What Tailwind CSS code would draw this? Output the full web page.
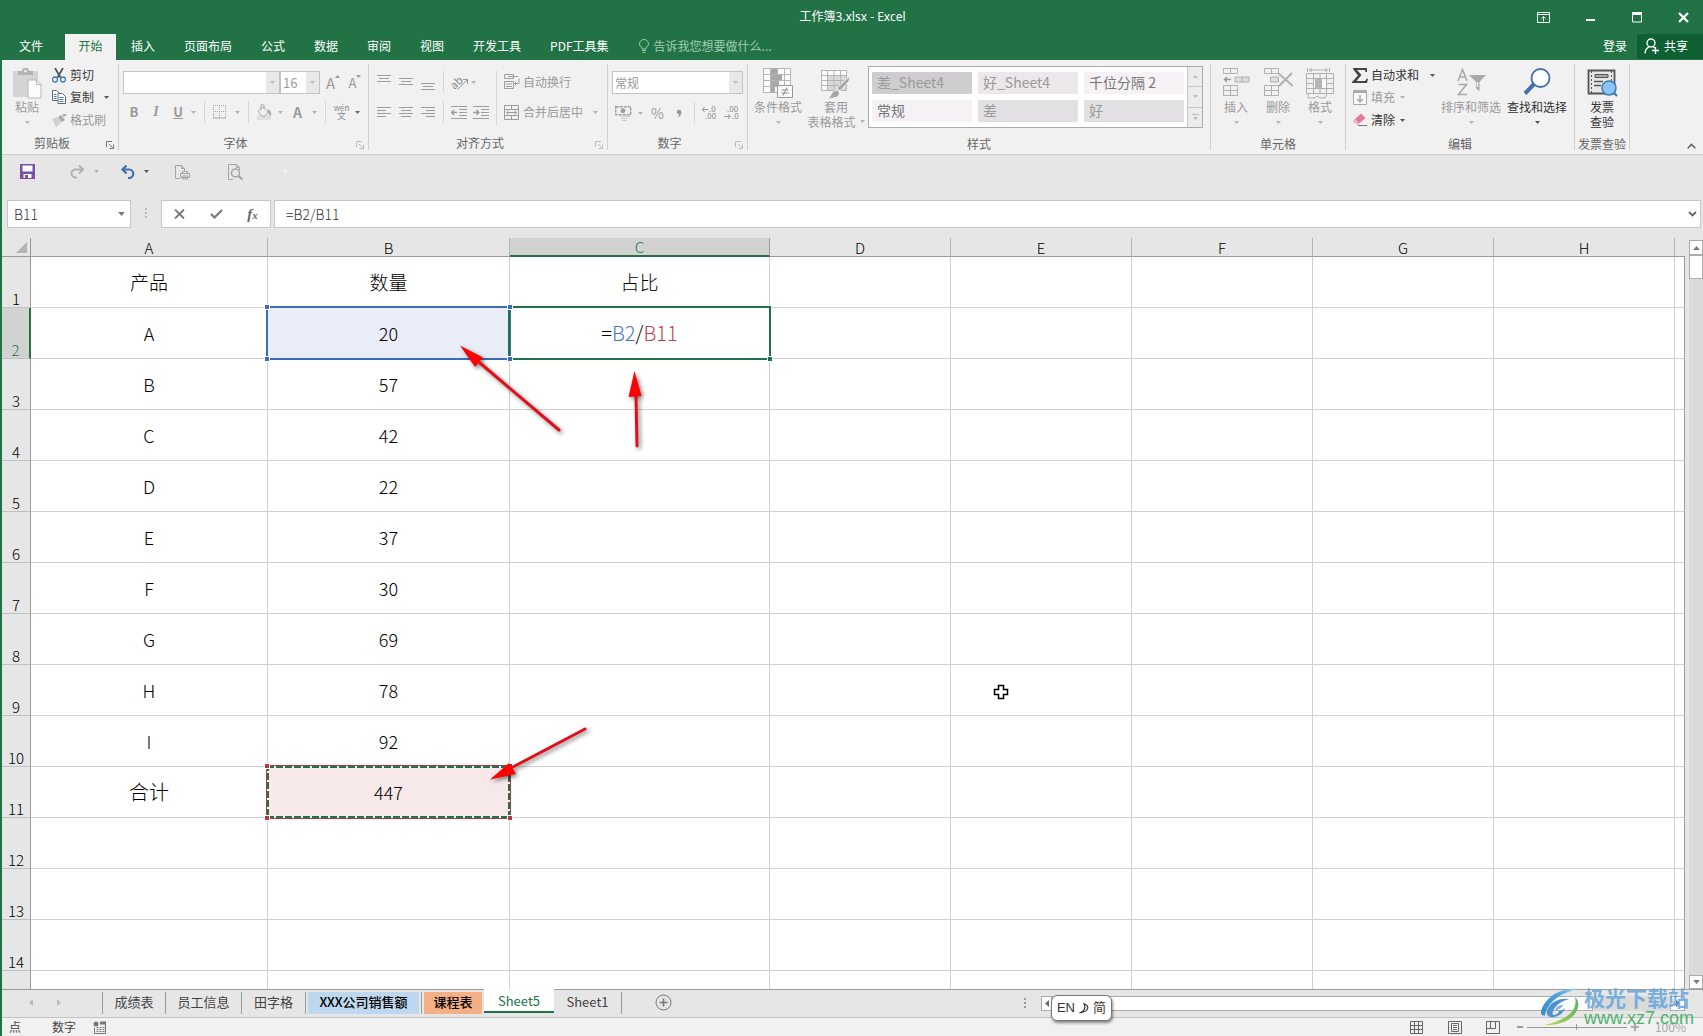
<!DOCTYPE html>
<html lang="zh-CN">
<head>
<meta charset="utf-8">
<title>工作簿3.xlsx - Excel</title>
<script src="https://cdn.jsdelivr.net/npm/@tailwindcss/browser@4"></script>
</head>
<body class="h-screen overflow-hidden bg-[#e6e6e6] font-['Noto_Sans_CJK_SC','Noto_Sans',sans-serif] text-xs leading-4 text-[#333]">

<svg class="hidden">
  <symbol id="caret" viewBox="0 0 5 3"><path d="M0 0h5L2.5 3z" fill="currentColor"/></symbol>
  <symbol id="launch" viewBox="0 0 8 8"><path d="M.5 6V.5H6M3 3l3.500 3.500M7.500 3.500v4h-4" fill="none" stroke="currentColor"/></symbol>
</svg>

<div class="flex h-full flex-col border-l-2 border-[#217346]">

  <!-- title bar -->
  <header class="shrink-0 bg-[#217346] text-white">
    <div class="flex h-[34px] items-center">
      <div class="flex-1 pl-[14px]"></div>
      <h1 class="font-['Noto_Sans','Noto_Sans_CJK_SC',sans-serif] text-xs">工作簿3.xlsx - Excel</h1>
      <div class="flex flex-1 items-center justify-end gap-9 pr-[14px]">
        <button aria-label="功能区显示选项"><svg class="h-[11px] w-[13px]" viewBox="0 0 13 11" fill="none" stroke="#fff"><path d="M.5.500h12v10H.5zM.5 2.500h12M6.500 9.500v-5M4.500 6.500l2-2 2 2"/></svg></button>
        <button aria-label="最小化"><svg class="h-[11px] w-[10px]" viewBox="0 0 10 11"><path d="M0 7h9v2H0z" fill="#fff"/></svg></button>
        <button aria-label="最大化"><svg class="h-[11px] w-[10px]" viewBox="0 0 10 11"><path d="M.5.500h9v9.500h-9z" fill="none" stroke="#fff"/><path d="M0 0h10v3H0z" fill="#fff"/></svg></button>
        <button aria-label="关闭"><svg class="h-[11px] w-[11px]" viewBox="0 0 11 11"><path d="M1 1l9 9M10 1l-9 9" stroke="#fff" stroke-width="2.200"/></svg></button>
      </div>
    </div>
    <nav class="flex h-[26px] items-stretch gap-px *:pb-[2px]">
      <button class="w-[58px]">文件</button>
      <button class="ml-1 w-[51px] bg-[#f1f1f1] text-[#217346]">开始</button>
      <button class="px-[14px]">插入</button>
      <button class="px-[14px]">页面布局</button>
      <button class="px-[14px]">公式</button>
      <button class="px-[14px]">数据</button>
      <button class="px-[14px]">审阅</button>
      <button class="px-[14px]">视图</button>
      <button class="px-[14px]">开发工具</button>
      <button class="px-[14px]">PDF工具集</button>
      <button class="flex items-center gap-1 pl-[14px] text-[#a3cbb2]">
        <svg class="h-[14px] w-[12px]" viewBox="0 0 12 14" fill="none" stroke="currentColor"><path d="M4 10V8.500C2.500 7.500 1.500 6.500 1.500 4.800a4.500 4.300 0 0 1 9 0C10.500 6.500 9.500 7.500 8 8.500V10zM4 11.500h4M4.500 13.500h3"/></svg>
        告诉我您想要做什么...
      </button>
      <div class="flex-1"></div>
      <button class="px-[9px]">登录</button>
      <button class="flex h-[25px] w-[66px] items-center gap-1 bg-[#0e5f31] pl-[7px]">
        <svg class="h-4 w-4" viewBox="0 0 16 16" fill="none" stroke="#fff" stroke-width="1.400"><circle cx="7" cy="5" r="4"/><path d="M1 15.500C1.200 12 3 9.800 5 8.800M9 8.500l2 1.500M8 12.500h7M11.500 9v7"/></svg>
        共享
      </button>
    </nav>
  </header>

  <!-- ribbon -->
  <section class="flex h-[95px] shrink-0 items-start border-b border-[#cfcfcf] bg-[#f1f1f1] pt-1 text-[#9a9a9a]">

    <div class="flex h-[86px] w-[117px] flex-col border-r border-[#d0d0d0]">
      <div class="flex flex-1">
        <button class="flex w-[50px] flex-col items-center pt-1">
          <svg class="h-[31px] w-[29px]" viewBox="0 0 29 31"><path d="M0 3h25v26H0z" fill="#d6d3d6"/><path d="M5 3h4a3.500 3.500 0 0 1 7 0h4v4H5z" fill="#b4b4b4"/><circle cx="12.500" cy="3" r="1.300" fill="#f1f1f1"/><path d="M15 12h8.500l4.500 4.500V30H15z" fill="#fbfbfb" stroke="#b9b9b9"/><path d="M23.500 12v4.500H28" fill="none" stroke="#b9b9b9"/></svg>
          <span>粘贴</span>
          <svg class="mt-[6px] h-[3px] w-[5px] text-[#b5b5b5]"><use href="#caret"/></svg>
        </button>
        <div class="flex flex-col">
          <button class="flex h-[22px] items-center gap-1 text-[#3b3b3b]">
            <svg class="h-[15px] w-[14px]" viewBox="0 0 14 15" fill="none"><path d="M3 0l5.500 9.500M11 0L5.500 9.500" stroke="#555" stroke-width="1.800"/><circle cx="3" cy="11.500" r="2.500" stroke="#3f78b5" stroke-width="1.300"/><circle cx="11" cy="11.500" r="2.500" stroke="#3f78b5" stroke-width="1.300"/></svg>
            剪切
          </button>
          <div class="flex h-[22px] items-center">
            <button class="flex items-center gap-1 text-[#3b3b3b]">
              <svg class="h-[14px] w-[14px]" viewBox="0 0 14 14" fill="#fff" stroke="#5d6d80"><path d="M.5.500h4l3 3v7h-7z"/><path d="M6 3.500h4.500l3 3v7H6z"/><path d="M2 4.500h2.500M2 6.500h2.500M2 8.500h2.500M7.500 7.500h4M7.500 9.500h4M7.500 11.500h4" stroke="#3f78b5"/></svg>
              复制
            </button>
            <button class="ml-[10px]" aria-label="复制选项"><svg class="h-[3px] w-[5px] text-[#555]"><use href="#caret"/></svg></button>
          </div>
          <button class="flex h-[24px] items-center gap-[3px]">
            <svg class="h-[13px] w-[15px]" viewBox="0 0 15 13"><path d="M0 5l6-2 4 5-6 5z" fill="#d0d0d0"/><path d="M6 3l3-2 4 5-3 2z" fill="#aaa"/><path d="M11 2l3-2" stroke="#aaa" stroke-width="2.500"/></svg>
            格式刷
          </button>
        </div>
      </div>
      <div class="flex h-[14px] items-center text-[#666]"><span class="flex-1 text-center">剪贴板</span><button class="w-4 pl-1 pt-1" aria-label="剪贴板设置"><svg class="h-2 w-2 text-[#777]"><use href="#launch"/></svg></button></div>
    </div>

    <div class="flex h-[86px] w-[250px] flex-col border-r border-[#d0d0d0]">
      <div class="flex-1 pl-1">
        <div class="mt-[7px] flex h-[23px] items-center">
          <div class="flex h-full w-[157px] border border-[#c4c4c4] bg-white"><input aria-label="字体" class="min-w-0 flex-1 bg-transparent px-1"><button aria-label="选择字体" class="flex w-[13px] items-center justify-center bg-[#e8e8e8]"><svg class="h-[3px] w-[5px] text-[#bbb]"><use href="#caret"/></svg></button></div>
          <div class="flex h-full w-[40px] border border-[#c4c4c4] bg-white"><input aria-label="字号" value="16" class="w-[25px] bg-transparent pl-[2px] text-[13px]"><button aria-label="选择字号" class="flex w-[13px] items-center justify-center bg-[#e8e8e8]"><svg class="h-[3px] w-[5px] text-[#bbb]"><use href="#caret"/></svg></button></div>
          <button aria-label="增大字号" class="ml-1 flex w-[18px] items-start justify-center text-[15px]">A<svg class="h-[3px] w-[5px] rotate-180"><use href="#caret"/></svg></button>
          <button aria-label="减小字号" class="ml-1 flex w-[18px] items-start justify-center text-[13px]">A<svg class="h-[3px] w-[5px]"><use href="#caret"/></svg></button>
        </div>
        <div class="mt-[7px] flex h-[22px] items-center">
          <button class="w-[22px] text-[13px] font-bold">B</button>
          <button class="w-[22px] font-['Liberation_Serif',serif] text-[14px] font-bold italic">I</button>
          <button class="w-[22px] text-[13px] font-bold underline">U</button>
          <svg class="ml-[2px] h-[3px] w-[5px] text-[#b5b5b5]"><use href="#caret"/></svg>
          <span class="ml-[8px] h-[22px] w-px bg-[#d5d5d5]"></span>
          <button aria-label="边框" class="ml-2 flex items-center gap-2"><svg class="h-[14px] w-[14px]" viewBox="0 0 14 14" fill="none" stroke="#a5a5a5"><path d="M.5 0v13M6.500 0v13M12.500 0v13M0 .500h13M0 6.500h13" stroke-dasharray="1 1"/><path d="M0 13h13"/></svg><svg class="h-[3px] w-[5px] text-[#b5b5b5]"><use href="#caret"/></svg></button>
          <span class="ml-[8px] h-[22px] w-px bg-[#d5d5d5]"></span>
          <button aria-label="填充颜色" class="ml-[7px] flex items-center gap-[6px]"><svg class="h-[16px] w-[16px]" viewBox="0 0 16 16" fill="none" stroke="#a5a5a5"><path d="M1 11h14v5H1z" fill="#e2dede" stroke="none"/><path d="M7 2.500l5.500 5.500L7.500 13 2 7.500zM5 6V1.500a1.500 1.500 0 0 1 3 0V5" /><path d="M12.500 6c2 1 2.500 3 2 5.500-1-2-1.500-2.500-2.500-3z" fill="#a5a5a5"/></svg><svg class="h-[3px] w-[5px] text-[#b5b5b5]"><use href="#caret"/></svg></button>
          <button aria-label="字体颜色" class="ml-[10px] flex items-center gap-[10px] text-[14px] font-bold">A<svg class="h-[3px] w-[5px] text-[#b5b5b5]"><use href="#caret"/></svg></button>
          <span class="ml-[8px] h-[22px] w-px bg-[#d5d5d5]"></span>
          <button aria-label="拼音" class="ml-[7px] flex items-center gap-[5px]"><svg class="h-[18px] w-[17px] overflow-visible" viewBox="0 0 17 18" fill="#888" font-family="Noto Sans CJK SC" text-anchor="middle"><text x="8.500" y="8" font-size="8">wén</text><text x="8.500" y="16" font-size="9">文</text></svg><svg class="h-[3px] w-[5px] text-[#666]"><use href="#caret"/></svg></button>
        </div>
      </div>
      <div class="flex h-[14px] items-center text-[#666]"><span class="flex-1 text-center">字体</span><button class="w-4 pl-1 pt-1" aria-label="字体设置"><svg class="h-2 w-2 text-[#bbb]"><use href="#launch"/></svg></button></div>
    </div>

    <div class="flex h-[86px] w-[239px] flex-col border-r border-[#d0d0d0]">
      <div class="flex flex-1 pl-2 pt-[7px]">
        <div class="flex flex-col gap-2">
          <div class="flex h-[22px] items-center gap-2">
            <button aria-label="顶端对齐"><svg class="h-[18px] w-[14px]" viewBox="0 0 14 18" stroke="#9d9d9d"><path d="M0 2.500h14M2 5.500h10M0 8.500h14"/></svg></button>
            <button aria-label="垂直居中"><svg class="h-[18px] w-[14px]" viewBox="0 0 14 18" stroke="#9d9d9d"><path d="M0 5.500h14M2 8.500h10M0 11.500h14"/></svg></button>
            <button aria-label="底端对齐"><svg class="h-[18px] w-[14px]" viewBox="0 0 14 18" stroke="#9d9d9d"><path d="M0 10.500h14M2 13.500h10M0 16.500h14"/></svg></button>
            <span class="h-[22px] w-px bg-[#d5d5d5]"></span>
            <button aria-label="方向" class="-ml-px flex items-center gap-[2px]"><svg class="h-[17px] w-[18px] overflow-visible" viewBox="0 0 18 17" fill="none"><text x="-1" y="13" transform="rotate(-45 5 9)" font-size="11" font-family="Noto Sans CJK SC" fill="#888">ab</text><path d="M6.500 15.500L16 6M12 5.500h4.500V10" stroke="#999"/></svg><svg class="h-[3px] w-[5px] text-[#b5b5b5]"><use href="#caret"/></svg></button>
          </div>
          <div class="flex h-[22px] items-center gap-2">
            <button aria-label="左对齐"><svg class="h-3 w-[14px]" viewBox="0 0 14 12" stroke="#9d9d9d"><path d="M0 1.500h14M0 4.500h9M0 7.500h14M0 10.500h9"/></svg></button>
            <button aria-label="居中"><svg class="h-3 w-[14px]" viewBox="0 0 14 12" stroke="#9d9d9d"><path d="M0 1.500h14M2 4.500h10M0 7.500h14M2 10.500h10"/></svg></button>
            <button aria-label="右对齐"><svg class="h-3 w-[14px]" viewBox="0 0 14 12" stroke="#9d9d9d"><path d="M0 1.500h14M5 4.500h9M0 7.500h14M5 10.500h9"/></svg></button>
            <span class="h-[22px] w-px bg-[#d5d5d5]"></span>
            <button aria-label="减少缩进量" class="-ml-px"><svg class="h-[13px] w-4" viewBox="0 0 16 13" fill="none" stroke="#9d9d9d"><path d="M0 .500h16M8 3.500h8M8 6.500h8M8 9.500h8M0 12.500h16"/><path d="M0 6.500h6M3 4L.7 6.500 3 9" stroke-width="1.500"/></svg></button>
            <button aria-label="增加缩进量" class="-ml-[2px]"><svg class="h-[13px] w-4" viewBox="0 0 16 13" fill="none" stroke="#9d9d9d"><path d="M0 .500h16M8 3.500h8M8 6.500h8M8 9.500h8M0 12.500h16"/><path d="M0 6.500h6M3.500 4l2.300 2.500L3.500 9" stroke-width="1.500"/></svg></button>
          </div>
        </div>
        <span class="ml-[7px] h-[54px] w-px bg-[#d5d5d5]"></span>
        <div class="ml-[7px] flex flex-col gap-2">
          <button class="flex h-[22px] items-center gap-[3px]">
            <svg class="h-4 w-4" viewBox="0 0 16 16" fill="none" stroke="#9d9d9d"><path d="M.5.500h9v4h-9zM4 2.500h10.500M.5 7.500h9v7h-9zM2 10h6M2 12.500h6M15 4.500v5h-4M12.500 7.500l-2 2 2 2"/></svg>自动换行
          </button>
          <div class="flex h-[22px] items-center">
            <button class="flex items-center gap-1">
              <svg class="h-[15px] w-[15px]" viewBox="0 0 15 15" fill="none" stroke="#9d9d9d"><path d="M.5.500h14v14H.5zM.5 4.500h14M.5 10.500h14M7.500.500v4M7.500 10.500v4M2.500 7.500h10M4.500 5.500l-2 2 2 2M10.500 5.500l2 2-2 2"/></svg>合并后居中
            </button>
            <button aria-label="合并选项" class="ml-[10px]"><svg class="h-[3px] w-[5px] text-[#b5b5b5]"><use href="#caret"/></svg></button>
          </div>
        </div>
      </div>
      <div class="flex h-[14px] items-center text-[#666]"><span class="flex-1 text-center">对齐方式</span><button class="w-4 pl-1 pt-1" aria-label="对齐设置"><svg class="h-2 w-2 text-[#bbb]"><use href="#launch"/></svg></button></div>
    </div>

    <div class="flex h-[86px] w-[140px] flex-col border-r border-[#d0d0d0]">
      <div class="flex-1 px-1">
        <div class="mt-[7px] flex h-[23px] border border-[#c4c4c4] bg-white">
          <select aria-label="数字格式" class="min-w-0 flex-1 appearance-none bg-transparent pl-[2px]"><option>常规</option></select>
          <span class="flex w-[13px] items-center justify-center bg-[#e8e8e8]"><svg class="h-[3px] w-[5px] text-[#bbb]"><use href="#caret"/></svg></span>
        </div>
        <div class="mt-[7px] flex h-[24px] items-center pl-[3px]">
          <button aria-label="会计数字格式" class="flex items-center gap-[6px]"><svg class="h-[15px] w-[17px]" viewBox="0 0 17 15" fill="none" stroke="#9d9d9d"><path d="M.7.700h15v8H.7z" stroke-dasharray="3 1" stroke-width="1.400"/><circle cx="8" cy="4.700" r="2" fill="#9d9d9d"/><path d="M6 10.500h9M6 12.500h6M7 14.500h5" stroke="#ccc"/></svg><svg class="h-[3px] w-[5px] text-[#b5b5b5]"><use href="#caret"/></svg></button>
          <button class="ml-2 text-[14px]">%</button>
          <button aria-label="千位分隔样式" class="ml-3"><svg class="h-[9px] w-[6px]" viewBox="0 0 6 9"><circle cx="3" cy="3" r="2.300" fill="#999"/><path d="M5.300 3C5.500 6 4 8 1 8.500 3 7 3.500 6 3 4z" fill="#999"/></svg></button>
          <span class="ml-3 h-[22px] w-px bg-[#d5d5d5]"></span>
          <button aria-label="增加小数位数" class="ml-[7px]"><svg class="h-4 w-4 overflow-visible" viewBox="0 0 16 16" fill="#888" font-family="Noto Sans CJK SC" font-size="8"><text x="7" y="7">.0</text><text x="3" y="14">.00</text><path d="M0 4.500h6M2.500 2L.5 4.500 2.500 7" fill="none" stroke="#999"/></svg></button>
          <button aria-label="减少小数位数" class="ml-[6px]"><svg class="h-4 w-4 overflow-visible" viewBox="0 0 16 16" fill="#888" font-family="Noto Sans CJK SC" font-size="8"><text x="3" y="7">.00</text><text x="8" y="14">.0</text><path d="M0 11.500h6M4 9l2 2.500L4 14" fill="none" stroke="#999"/></svg></button>
        </div>
      </div>
      <div class="flex h-[14px] items-center text-[#666]"><span class="flex-1 text-center">数字</span><button class="w-4 pl-1 pt-1" aria-label="数字设置"><svg class="h-2 w-2 text-[#bbb]"><use href="#launch"/></svg></button></div>
    </div>

    <div class="flex h-[86px] w-[463px] flex-col border-r border-[#d0d0d0]">
      <div class="flex flex-1">
        <button class="flex w-[60px] flex-col items-center pt-1">
          <svg class="h-[31px] w-[30px]" viewBox="0 0 30 31" fill="none" stroke="#b5b5b5"><path d="M.5.500h27v24H.5z" fill="#fbfbfb"/><path d="M7.500.500v24M14.500.500v24M21.500.500v24M.5 6.500h27M.5 12.500h27M.5 18.500h27"/><path d="M8 1h6v5H8zM8 7h11v5H8zM8 13h8v5H8zM8 19h4v5H8z" fill="#a8a8a8" stroke="none"/><path d="M14.500 17.500h15v12h-15z" fill="#fbfbfb" stroke="#999"/><path d="M18.500 22h7M18.500 25h7M24 19.500l-4 8" stroke="#888"/></svg>
          <span>条件格式</span>
          <svg class="mt-[6px] h-[3px] w-[5px] text-[#b5b5b5]"><use href="#caret"/></svg>
        </button>
        <button class="mr-1 flex w-[56px] flex-col items-center pt-1 leading-[15px]">
          <svg class="h-[31px] w-[30px]" viewBox="0 0 30 31" fill="none" stroke="#b5b5b5"><path d="M.5 2.500h25v20H.5z" fill="#fbfbfb"/><path d="M7 8h18v14H7z" fill="#dcd9dc" stroke="none"/><path d="M6.500 2.500v20M13 2.500v20M19.500 2.500v20M.5 7.500h25M.5 12.500h25M.5 17.500h25"/><path d="M29 8l-1 5-9 10-3-3z" fill="#a5a5a5" stroke="#f1f1f1"/><path d="M6 30c4-1 4-4 6-6.500 2-2 5-1 6 .5s0 4-3 5.500c-3 1-6 .8-9 .5z" fill="#a5a5a5" stroke="#f1f1f1"/></svg>
          <span>套用</span>
          <span class="flex items-center gap-1 whitespace-nowrap">表格格式<svg class="h-[3px] w-[5px] text-[#b5b5b5]"><use href="#caret"/></svg></span>
        </button>
        <div class="mt-[2px] flex h-[62px] w-[335px] border border-[#ababab] bg-white text-[14px] leading-[20px]">
          <div class="grid flex-1 grid-cols-3 content-center gap-[6px] px-[3px] *:pb-[2px]">
            <button class="h-[22px] bg-[#cfcdcf] pl-[5px] text-left">差_Sheet4</button>
            <button class="h-[22px] bg-[#ebe7ea] pl-[5px] text-left">好_Sheet4</button>
            <button class="h-[22px] bg-[#f5f1f5] pl-[5px] text-left text-[#777]">千位分隔 2</button>
            <button class="h-[22px] bg-[#f5f1f5] pl-[5px] text-left text-[#777]">常规</button>
            <button class="h-[22px] bg-[#e3e0e3] pl-[5px] text-left">差</button>
            <button class="h-[22px] bg-[#e3e0e3] pl-[5px] text-left">好</button>
          </div>
          <div class="flex w-[15px] flex-col divide-y divide-[#c6c6c6] border-l border-[#c6c6c6] bg-[#ececec] text-[#bbb]">
            <button aria-label="上一行" class="flex flex-1 items-center justify-center"><svg class="h-[3px] w-[5px] rotate-180"><use href="#caret"/></svg></button>
            <button aria-label="下一行" class="flex flex-1 items-center justify-center"><svg class="h-[3px] w-[5px]"><use href="#caret"/></svg></button>
            <button aria-label="其他样式" class="flex flex-1 flex-col items-center justify-center gap-[2px]"><span class="h-px w-[7px] bg-[#bbb]"></span><svg class="h-[3px] w-[5px]"><use href="#caret"/></svg></button>
          </div>
        </div>
      </div>
      <div class="h-[14px] text-center text-[#666]">样式</div>
    </div>

    <div class="flex h-[86px] w-[135px] flex-col border-r border-[#d0d0d0]">
      <div class="flex flex-1 pl-1">
        <button class="flex w-[42px] flex-col items-center pt-1">
          <svg class="h-[31px] w-[27px]" viewBox="0 0 27 31" fill="none" stroke="#b0b0b0"><path d="M.5.500h14v5H.5zM7.500.500v5M.5 17.500h14v10H.5zM7.500 17.500v10M.5 22.500h14"/><path d="M12 9h14v5H12z" fill="#ddd"/><path d="M19 9v5"/><path d="M1 11.500h7M4 9l-2.500 2.500L4 14" stroke="#999" stroke-width="1.500"/></svg>
          <span>插入</span>
          <svg class="mt-[6px] h-[3px] w-[5px] text-[#b5b5b5]"><use href="#caret"/></svg>
        </button>
        <button class="flex w-[42px] flex-col items-center pt-1">
          <svg class="h-[31px] w-[29px]" viewBox="0 0 29 31" fill="none" stroke="#b0b0b0"><path d="M.5.500h14v5H.5zM7.500.500v5M.5 17.500h14v10H.5zM7.500 17.500v10M.5 22.500h14"/><path d="M6.500 9h8v5h-8z" fill="#ddd"/><path d="M14 5l15 13M28 5L15 18" stroke="#b0b0b0" stroke-width="2"/></svg>
          <span>删除</span>
          <svg class="mt-[6px] h-[3px] w-[5px] text-[#b5b5b5]"><use href="#caret"/></svg>
        </button>
        <button class="flex w-[42px] flex-col items-center pt-1">
          <svg class="h-[31px] w-[29px]" viewBox="0 0 29 31" fill="none" stroke="#b0b0b0"><path d="M1.500 0v4M23.500 0v4M3 2h19M6 0L3.500 2 6 4M19 0l2.500 2L19 4M.5 5.500h27v20H.5z"/><path d="M7.500 5.500v20M20.500 5.500v20M.5 10.500h27M.5 20.500h27M.5 15.500h27M14 5.500v5M14 20.500v5M2 25.500v4.500h7l2-2 3 2h5l2-4"/><path d="M8 11h12v9H8z" fill="#fbfbfb" stroke="none"/><path d="M9 11h7v9H9z" fill="#b5b5b5" stroke="none"/></svg>
          <span>格式</span>
          <svg class="mt-[6px] h-[3px] w-[5px] text-[#b5b5b5]"><use href="#caret"/></svg>
        </button>
      </div>
      <div class="h-[14px] text-center text-[#666]">单元格</div>
    </div>

    <div class="flex h-[86px] w-[229px] flex-col border-r border-[#d0d0d0] text-[#333]">
      <div class="flex flex-1 pl-[6px]">
        <div class="flex w-[86px] flex-col">
          <button class="flex h-[22px] items-center gap-[3px]"><svg class="h-[15px] w-4" viewBox="0 0 16 15"><path d="M1 0h14v4h-1.500c0-1.500-.5-2-2-2H5l4.500 5L4.500 13H12c1.500 0 2-.8 2.300-2.300H16L15 15H0v-1l6-6.500L1 1z" fill="#444"/></svg>自动求和<svg class="ml-2 h-[3px] w-[5px] text-[#555]"><use href="#caret"/></svg></button>
          <button class="flex h-[22px] items-center gap-[3px] text-[#9a9a9a]"><svg class="h-[15px] w-4" viewBox="0 0 16 15" fill="none" stroke="#aaa"><path d="M1.500.500h13v14h-13z" fill="#fbfbfb"/><path d="M1.500 2h13" stroke-width="2"/><path d="M8 5v7M5 9l3 3 3-3" stroke-width="1.500"/></svg>填充<svg class="ml-[2px] h-[3px] w-[5px] text-[#b5b5b5]"><use href="#caret"/></svg></button>
          <button class="flex h-[24px] items-center gap-[3px]"><svg class="h-[14px] w-4" viewBox="0 0 16 14"><path d="M1 8l8-7.500 4.500 4.500-8 7z" fill="#e27b93"/><path d="M1 8l2-2 4.500 4.500-2 1.500z" fill="#f2b6c4"/><path d="M6 12.500h9" stroke="#777"/></svg>清除<svg class="ml-[2px] h-[3px] w-[5px] text-[#555]"><use href="#caret"/></svg></button>
        </div>
        <button class="flex w-[66px] flex-col items-center pt-1 text-[#9a9a9a]">
          <svg class="h-[31px] w-[30px]" viewBox="0 0 30 31" fill="none" stroke="#aaa" stroke-width="1.600"><path d="M2 13L6.500 1.500 11 13M3.500 9h6M2.500 16.500h8L2.500 26.500h8.500"/><path d="M13 7h17l-6.500 7v9l-3.500-2.500V14z" fill="#aaa" stroke="none"/><path d="M21.500 14v5" stroke="#eee"/></svg>
          <span>排序和筛选</span>
          <svg class="mt-[6px] h-[3px] w-[5px] text-[#b5b5b5]"><use href="#caret"/></svg>
        </button>
        <button class="flex w-[66px] flex-col items-center pt-1">
          <svg class="h-[31px] w-[28px]" viewBox="0 0 28 31" fill="none"><path d="M2 25.500l9-9.500" stroke="#3f72ad" stroke-width="4"/><circle cx="17.500" cy="10" r="9" fill="#fff" stroke="#3f72ad" stroke-width="1.800"/></svg>
          <span>查找和选择</span>
          <svg class="mt-[6px] h-[3px] w-[5px] text-[#555]"><use href="#caret"/></svg>
        </button>
      </div>
      <div class="h-[14px] text-center text-[#666]">编辑</div>
    </div>

    <div class="flex h-[86px] w-[55px] flex-col border-r border-[#d0d0d0] text-[#333]">
      <button class="flex flex-1 flex-col items-center pt-1 leading-[15px]">
        <svg class="h-[31px] w-[31px]" viewBox="0 0 31 31" fill="none" stroke="#555"><path d="M1.500 2.500h26v23h-26z" fill="#e6e6e6" stroke-width="1.800"/><path d="M4.500 3v22M24.500 3v22" stroke-dasharray="2 2"/><path d="M8 6.500h13v3H8z" fill="#aaa"/><path d="M7 13.500h9M7 17.500h7" stroke-width="1.600"/><circle cx="22" cy="20" r="7" fill="#8cc4f5" stroke="#3a7cba" stroke-width="1.500"/><path d="M27 25l3 3" stroke="#3a7cba" stroke-width="2"/></svg>
        <span>发票</span><span>查验</span>
      </button>
      <div class="h-[14px] text-center text-[#666]">发票查验</div>
    </div>

    <button aria-label="折叠功能区" class="ml-auto mr-[7px] self-end pb-[5px]"><svg class="h-[6px] w-[9px]" viewBox="0 0 9 6" fill="none" stroke="#666" stroke-width="1.600"><path d="M.7 5.200l3.800-3.800 3.800 3.800"/></svg></button>
  </section>

  <!-- quick access toolbar -->
  <div class="flex h-[35px] shrink-0 items-center pb-[2px] pl-[18px]">
    <button aria-label="保存"><svg class="h-[15px] w-[15px]" viewBox="0 0 15 15"><path d="M0 0h15v15H0z" fill="#7b50a8"/><path d="M2.500 1.500h10v6h-10zM3.500 10h8v4h-8z" fill="#fff"/><path d="M5 11h3v3H5z" fill="#7b50a8"/></svg></button>
    <button aria-label="恢复" class="ml-[35px] flex items-center gap-[10px] text-[#b0b0b0]"><svg class="h-[14px] w-[14px]" viewBox="0 0 14 14" fill="none" stroke="currentColor" stroke-width="2"><path d="M9 .500L13 4.500 9 8.500M13 4.500H5.500a4 4 0 0 0 0 8h1.500"/></svg><svg class="h-[3px] w-[5px]"><use href="#caret"/></svg></button>
    <button aria-label="撤消" class="ml-[22px] flex items-center gap-[9px] text-[#3f6fa8]"><svg class="h-[14px] w-[14px]" viewBox="0 0 14 14" fill="none" stroke="currentColor" stroke-width="2.200"><path d="M5.500.500L1.500 4.500l4 4M1.500 4.500H8a4 4 0 0 1 0 8.500H7"/></svg><svg class="h-[3px] w-[5px] text-[#555]"><use href="#caret"/></svg></button>
    <button aria-label="快速打印" class="ml-[25px]"><svg class="h-[16px] w-[17px]" viewBox="0 0 17 16" fill="none" stroke="#a5a5a5"><path d="M6 14.500H1.500v-13h6l3 3v3M1.500 3h-1M7.500 1.500v3h3"/><path d="M6.500 9.500h9v4h-9zM8.500 9.500v-2h5v2M8.500 12h5v3h-5z"/></svg></button>
    <button aria-label="打印预览" class="ml-[37px]"><svg class="h-[16px] w-[15px]" viewBox="0 0 15 16" fill="none" stroke="#a5a5a5"><path d="M5 15.500H.5V.500h8l3 3V6M8.500.500v3h3"/><circle cx="7.500" cy="9" r="4" stroke-width="1.500"/><path d="M10.500 12l4 3.500" stroke-width="2"/></svg></button>
    <button aria-label="自定义工具栏" class="ml-10"><svg class="h-[3px] w-[5px] text-[#f4f4f4]"><use href="#caret"/></svg></button>
  </div>

  <!-- formula bar -->
  <div class="mt-[10px] flex h-[28px] shrink-0 items-stretch pl-[5px] pr-[2px] text-sm">
    <div class="flex w-[124px] border border-[#c6c6c6] bg-white">
      <input aria-label="名称框" value="B11" class="min-w-0 flex-1 bg-transparent pl-[6px] font-light">
      <button aria-label="名称列表" class="flex w-[17px] items-center justify-center text-[#777]"><svg class="h-[4px] w-[7px]"><use href="#caret"/></svg></button>
    </div>
    <svg class="mx-[14px] h-full w-[2px]" viewBox="0 0 2 28" fill="#aaa"><path d="M0 8h1.500v2H0zM0 12h1.500v2H0zM0 16h1.500v2H0z"/></svg>
    <div class="flex w-[110px] items-center justify-around border border-[#c6c6c6] bg-white">
      <button aria-label="取消"><svg class="h-[10px] w-[11px]" viewBox="0 0 11 10" stroke="#777" stroke-width="1.800"><path d="M1 .500l9 9M10 .500l-9 9"/></svg></button>
      <button aria-label="输入"><svg class="h-[10px] w-[13px]" viewBox="0 0 13 10" fill="none" stroke="#777" stroke-width="2.200"><path d="M1 5l3.500 3.500L12 1"/></svg></button>
      <button aria-label="插入函数" class="font-['Liberation_Serif',serif] text-[15px] font-bold italic leading-none text-[#666]">f<span class="text-[11px]">x</span></button>
    </div>
    <div class="ml-[3px] flex flex-1 border border-[#c6c6c6] bg-white">
      <input aria-label="编辑栏" value="=B2/B11" class="min-w-0 flex-1 bg-transparent pl-[11px] font-light">
      <button aria-label="展开编辑栏" class="flex w-4 items-center justify-center"><svg class="h-[6px] w-[9px]" viewBox="0 0 9 6" fill="none" stroke="#666" stroke-width="1.800"><path d="M1 1l3.500 3.500L8 1"/></svg></button>
    </div>
  </div>

  <!-- worksheet -->
  <main class="mt-[10px] flex min-h-0 flex-1">
    <div class="relative min-w-0 flex-1 overflow-hidden">
      <table class="w-full table-fixed border-separate border-spacing-0 text-center font-light text-black">
        <colgroup>
          <col class="w-[29px]"><col class="w-[237px]"><col class="w-[242px]"><col class="w-[260px]"><col class="w-[181px]"><col class="w-[181px]"><col class="w-[181px]"><col class="w-[181px]"><col class="w-[181px]"><col>
        </colgroup>
        <thead>
          <tr id="head" class="h-[19px] text-[15px] leading-[17px]"></tr>
        </thead>
        <tbody id="rows"></tbody>
      </table>

      <!-- annotation arrows -->
      <svg class="absolute left-0 top-0 z-40 h-[600px] w-[800px] drop-shadow-[2px_2px_2px_rgba(0,0,0,0.5)]" viewBox="2 238 800 600" fill="#fe0000" stroke="#e0101a" stroke-width="3" stroke-linecap="round">
        <path d="M559 430L480 363M637 446l-1-50M585 729l-74 39"/>
        <path d="M460 345.500l23 12-8 9.500zM634.500 371l7 25-13 1zM490 779.500l19-16.500 7 11z" stroke="none"/>
      </svg>
      <!-- mouse pointer -->
      <svg class="absolute left-[991px] top-[446px] h-4 w-4" viewBox="0 0 16 16"><path d="M5.500 1.500h5v4h4v5h-4v4h-5v-4h-4v-5h4z" fill="#fff" stroke="#000" stroke-width="1.500"/></svg>
    </div>
    <div class="mt-[2px] flex w-[18px] flex-col pl-1">
      <button aria-label="向上滚动" class="flex h-[15px] items-center justify-center border border-[#ababab] bg-white text-[#777]"><svg class="h-[4px] w-[7px] rotate-180"><use href="#caret"/></svg></button>
      <div class="flex-1 bg-[#dadada]"><div class="h-[24px] border border-[#ababab] bg-white"></div></div>
      <button aria-label="向下滚动" class="flex h-[14px] items-center justify-center border border-[#ababab] bg-white text-[#777]"><svg class="h-[4px] w-[7px]"><use href="#caret"/></svg></button>
    </div>
  </main>

  <!-- sheet tabs -->
  <footer class="relative shrink-0">
    <div class="flex h-[28px] items-start border-t border-[#9b9b9b] text-[13px] text-[#444]">
      <button aria-label="上一张" class="ml-[27px] mt-[9px]"><svg class="h-[7px] w-1" viewBox="0 0 4 7"><path d="M4 0v7L0 3.500z" fill="#bbb"/></svg></button>
      <button aria-label="下一张" class="ml-6 mt-[9px]"><svg class="h-[7px] w-1" viewBox="0 0 4 7"><path d="M0 0v7l4-3.500z" fill="#bbb"/></svg></button>
      <div class="ml-[41px] mt-[2px] flex h-[22px] items-stretch border-l border-[#9b9b9b]">
        <button class="w-[63px] border-r border-[#9b9b9b] pb-[3px]">成绩表</button>
        <button class="w-[76px] border-r border-[#9b9b9b] pb-[3px]">员工信息</button>
        <button class="w-[64px] border-r border-[#9b9b9b] pb-[3px]">田字格</button>
        <div class="border-r border-[#9b9b9b] px-[2px]"><button class="h-full w-[111px] bg-[#bdd7ee] pb-[3px] font-medium text-black">XXX公司销售额</button></div>
        <div class="px-[2px]"><button class="h-full w-[58px] bg-[#f4b084] pb-[3px] font-medium text-black">课程表</button></div>
      </div>
      <button class="-mt-px h-[24px] w-[70px] border-b-2 border-[#217346] bg-white pt-[2px] text-[#217346]">Sheet5</button>
      <button class="mt-[2px] h-[22px] w-[68px] border-r border-[#9b9b9b] pb-[3px]">Sheet1</button>
      <button aria-label="新工作表" class="ml-[33px] mt-1"><svg class="h-[17px] w-[17px]" viewBox="0 0 17 17" fill="none" stroke="#777"><circle cx="8.500" cy="8.500" r="7.500"/><path d="M8.500 4.500v8M4.500 8.500h8" stroke-width="1.600"/></svg></button>
      <div class="flex-1"></div>
      <svg class="mr-[15px] mt-2 h-[12px] w-[2px]" viewBox="0 0 2 12" fill="#999"><path d="M0 0h2v2H0zM0 4h2v2H0zM0 8h2v2H0z"/></svg>
      <div class="mr-[18px] mt-[6px] flex h-[15px] w-[644px] bg-[#dadada]">
        <button aria-label="向左滚动" class="flex w-[11px] items-center justify-center border border-[#ababab] bg-white"><svg class="h-[7px] w-1" viewBox="0 0 4 7"><path d="M4 0v7L0 3.500z" fill="#666"/></svg></button>
        <div class="w-[541px] border border-[#ababab] bg-white"></div>
        <button aria-label="向右滚动" class="ml-auto flex w-[15px] items-center justify-center border border-[#ababab] bg-white"><svg class="h-[7px] w-1" viewBox="0 0 4 7"><path d="M0 0v7l4-3.500z" fill="#666"/></svg></button>
      </div>
    </div>

    <div class="flex h-[19px] items-center border-t border-[#c3c3c3] bg-[#f1f1f1] pr-[17px] text-[#444]">
      <span class="ml-[7px]">点</span>
      <span class="ml-[31px]">数字</span>
      <svg class="ml-[17px] h-[13px] w-[13px]" viewBox="0 0 13 13" fill="none" stroke="#777"><circle cx="3" cy="3" r="2.500" fill="#777" stroke="none"/><path d="M7 2h6" stroke-width="3"/><path d="M1.500 6.500v6h11V3"/><path d="M3.500 6.500h8M3.500 8.500h8M3.500 10.500h8" stroke-dasharray="2 1"/></svg>
      <div class="flex-1"></div>
      <button aria-label="普通"><svg class="h-[13px] w-[13px]" viewBox="0 0 13 13" fill="none" stroke="#666"><path d="M.5.500h12v12H.5zM4.500.500v12M8.500.500v12M.5 4.500h12M.5 8.500h12"/></svg></button>
      <button aria-label="页面布局" class="ml-[25px]"><svg class="h-[13px] w-[14px]" viewBox="0 0 14 13" fill="none" stroke="#666"><path d="M.5.500h13v12H.5zM3.500 2.500h7v8h-7zM5 4.500h4M5 6.500h4M5 8.500h4"/></svg></button>
      <button aria-label="分页预览" class="ml-6"><svg class="h-[13px] w-[14px]" viewBox="0 0 14 13" fill="none" stroke="#666"><path d="M.5.500h13v12H.5zM4.500.500v7M.5 7.500h9M9.500.500v7"/></svg></button>
      <button aria-label="缩小" class="ml-[17px] h-[2px] w-[6px] bg-[#999]"></button>
      <input type="range" aria-label="缩放" class="ml-1 h-px w-[100px] appearance-none bg-[#999] [&::-webkit-slider-thumb]:h-[6px] [&::-webkit-slider-thumb]:w-px [&::-webkit-slider-thumb]:appearance-none [&::-webkit-slider-thumb]:bg-[#999]">
      <button aria-label="放大" class="ml-1"><svg class="h-2 w-2" viewBox="0 0 8 8" stroke="#aaa" stroke-width="2"><path d="M0 4h8M4 0v8"/></svg></button>
      <span class="ml-4 text-[#aaa]">100%</span>
    </div>

    <!-- input method badge -->
    <div class="absolute right-[591px] top-[6px] flex h-[26px] w-[61px] items-center justify-center gap-1 rounded-md border border-[#777] bg-white font-['Liberation_Sans','Noto_Sans_CJK_SC',sans-serif] text-[13px] text-[#333] shadow-[1px_2px_3px_rgba(0,0,0,0.45)]">
      EN <svg class="h-[11px] w-[10px]" viewBox="0 0 10 11" fill="none" stroke="#333" stroke-width="1.200"><path d="M5 .700c6 2 5 8-4.500 9.300 5-1.500 6.500-5.500 4.500-9.300z"/></svg> 简
    </div>

    <!-- download site mark -->
    <a href="#" class="absolute -top-[3px] right-[9px] flex items-center gap-[2px] whitespace-nowrap">
      <svg class="h-[40px] w-[42px]" viewBox="0 0 42 40">
        <defs>
          <linearGradient id="blue" x1="0" y1="1" x2="1" y2="0"><stop offset="0" stop-color="#3f86c8"/><stop offset=".6" stop-color="#4aa3da"/><stop offset="1" stop-color="#9ad6ea"/></linearGradient>
          <linearGradient id="green" x1="0" y1="1" x2="1" y2="0"><stop offset="0" stop-color="#b9d65a"/><stop offset="1" stop-color="#4fae62"/></linearGradient>
        </defs>
        <path d="M39 2C20 0 4 11 1 25c-.5 2.500 1 4 4 3.500C7 17 18 6 39 2z" fill="url(#blue)"/>
        <path d="M4 38c13 .5 24-3 30-10 5-6 6-13 1-18 2 8-1 14-8 19C21 33.500 13 36 4 38z" fill="url(#green)"/>
        <path d="M29 12C18 11 9 16 7 24c-1 4 2 7 7 6 6-1 10-5 11-9-2 2-4 3-6 3 0 2-3 4-6 4-2-4 4-13 16-16z" fill="#4b93d2"/>
        <path d="M15 23c3 0 7-2 8-5-4 0-7 2-8 5z" fill="#7fb6de"/>
      </svg>
      <span class="flex flex-col">
        <span class="text-[21px] font-bold leading-[22px] text-[#6aa8dc]/90">极光下载站</span>
        <span class="font-['Liberation_Sans',sans-serif] text-[18px] leading-[20px] text-[#4fb36e] ">www.xz7.com</span>
      </span>
    </a>
  </footer>
</div>

<script>
  const letters = ['A', 'B', 'C', 'D', 'E', 'F', 'G', 'H', ''];
  const data = [['产品', '数量', '占比'], ['A', '20', ''], ['B', '57'], ['C', '42'], ['D', '22'], ['E', '37'], ['F', '30'], ['G', '69'], ['H', '78'], ['I', '92'], ['合计', '447']];

  const corners = color => '<div class="absolute -left-[2px] -right-[2px] -top-[2px] -bottom-[2px] z-30">' +
    ['-left-[2px] -top-[2px]', '-right-[2px] -top-[2px]', '-left-[2px] -bottom-[2px]', '-right-[2px] -bottom-[2px]']
      .map(p => `<i class="absolute ${p} h-[6px] w-[6px] border border-white ${color}"></i>`).join('') + '</div>';

  // reference boxes and the cell being edited
  const overlays = {
    B2: `<div class="absolute -left-[2px] -right-[2px] -top-[2px] -bottom-[2px] z-10 border-2 border-[#3a6cb8]"></div>${corners('bg-[#3a6cb8]')}`,
    C2: `<div class="absolute -left-[2px] -right-[2px] -top-[2px] -bottom-[2px] z-20 border-2 border-[#217346]"><i class="absolute -bottom-[4px] -right-[4px] h-[6px] w-[6px] border border-white bg-[#217346]"></i></div>`,
    B11: `<div class="absolute -left-px -right-px -top-px -bottom-px z-10 outline outline-[#b5364a]"><svg class="absolute inset-0 h-full w-full"><rect x="0" y="0" width="100%" height="100%" fill="none" stroke="#fff" stroke-width="4"/><rect x="0" y="0" width="100%" height="100%" fill="none" stroke="#217346" stroke-width="4" stroke-dasharray="7 2"/></svg></div>${corners('bg-[#b5364a]')}`
  };
  const fills = { B2: 'bg-[#e8edf8]', B11: 'bg-[#f7e9ea]' };

  document.getElementById('head').innerHTML =
    '<th class="border-b border-r border-[#9b9b9b] bg-[#e6e6e6]"><svg class="ml-auto mr-[3px] h-[11px] w-[11px]" viewBox="0 0 11 11"><path d="M11 0v11H0z" fill="#b4b4b4"/></svg></th>' +
    letters.map(l => l === 'C'
      ? '<th class="border-b-2 border-r border-b-[#217346] border-r-[#9b9b9b] bg-[#d2d2d2] font-light text-[#217346]">C</th>'
      : l === ''
      ? '<th class="border-b border-[#9b9b9b]"></th>'
      : `<th class="border-b border-r border-b-[#9b9b9b] border-r-[#b4b4b4] font-light">${l}</th>`).join('');

  let html = '';
  for (let r = 1; r <= 15; r++) {
    const head = r === 2
      ? 'border-r-2 border-r-[#217346] border-b-[#c0c0c0] bg-[#d2d2d2] text-[#217346]'
      : 'border-r border-r-[#9b9b9b] border-b-[#c0c0c0] bg-[#e6e6e6]';
    html += `<tr class="h-[51px]"><th class="border-b ${head} align-bottom text-[15px] font-light leading-[17px]">${r < 15 ? r : ''}</th>`;
    letters.forEach((l, c) => {
      const key = l + r;
      const text = (data[r - 1] || [])[c] || '';
      const size = r === 1 ? 'text-[19px]' : /^[\x00-\x7f]*$/.test(text) ? 'text-[18px]' : 'text-[20px]';
      const body = key === 'C2'
        ? '<span class="text-[20px]">=<span class="text-[#4a73c4]">B2</span>/<span class="text-[#c0434f]">B11</span></span>'
        : text;
      const edge = l === '' ? 'border-r-[#9b9b9b]' : 'border-r-[#d0d0d0]';
      html += `<td class="relative border-b border-r border-b-[#d0d0d0] ${edge} ${fills[key] || 'bg-white'} ${size} leading-6">${overlays[key] || ''}${body}</td>`;
    });
    html += '</tr>';
  }
  document.getElementById('rows').innerHTML = html;
</script>
</body>
</html>
